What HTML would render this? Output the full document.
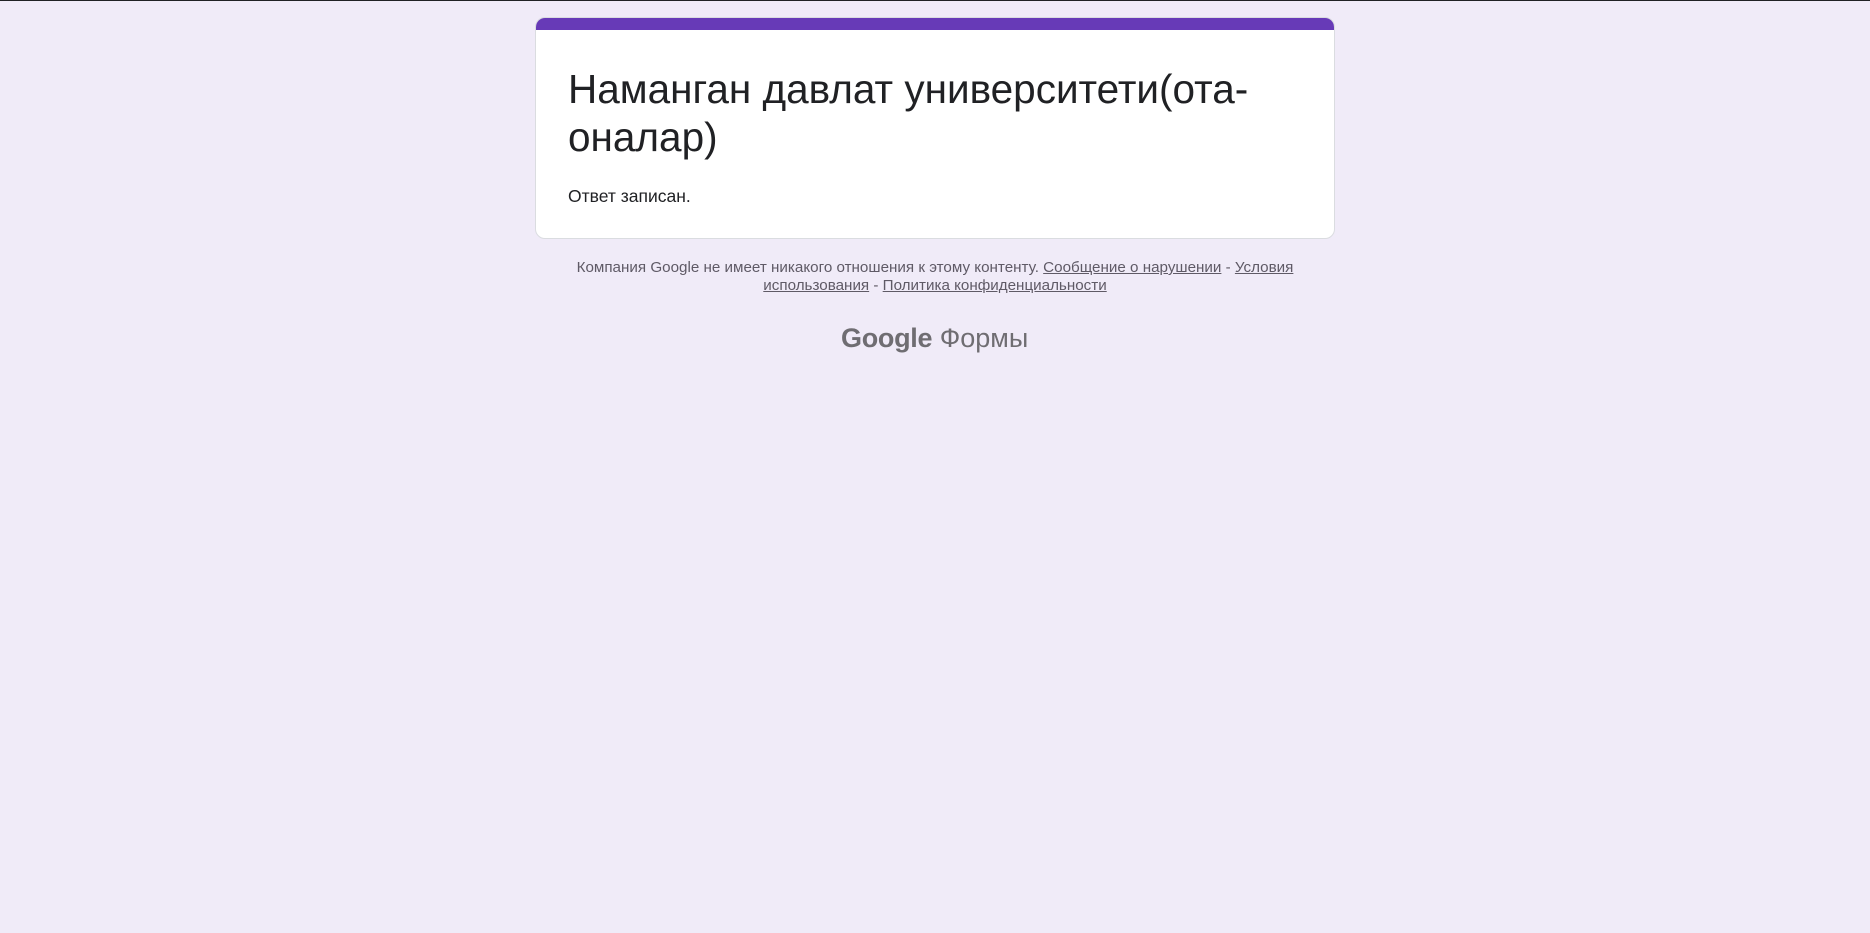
<!DOCTYPE html>
<html><head><meta charset="utf-8"><style>
html,body{margin:0;padding:0}
body{width:1870px;height:933px;background:#f0ebf8;font-family:"Liberation Sans",sans-serif;position:relative;overflow:hidden;border-top:1px solid #202124;box-sizing:border-box}
.card{position:absolute;left:535px;top:16px;width:800px;height:222px;box-sizing:border-box;background:#fff;border:1px solid #dadce0;border-radius:10px;overflow:hidden}
.band{position:absolute;left:-1px;right:-1px;top:-1px;height:13px;background:#673ab7}
.title{position:absolute;left:32px;top:47px;font-size:40.5px;line-height:48px;color:#202124;white-space:nowrap}
.msg{position:absolute;left:32px;top:166px;font-size:17.5px;line-height:24px;color:#202124}
.foot{position:absolute;left:535px;width:800px;top:258px;text-align:center;font-size:15.2px;line-height:17.5px;color:#5f5a66}
.foot a{color:#5f5a66;text-decoration:underline}
.logo{position:absolute;left:841px;top:321px;white-space:nowrap;color:#6f6d72;font-size:27px;line-height:32px}
.logo b{font-weight:bold;letter-spacing:-0.3px}
</style></head><body>
<div class="card"><div class="band"></div>
<div class="title">Наманган давлат университети(ота-<br>оналар)</div>
<div class="msg">Ответ записан.</div></div>
<div class="foot">Компания Google не имеет никакого отношения к этому контенту. <a>Сообщение о нарушении</a> - <a>Условия<br>использования</a> - <a>Политика конфиденциальности</a></div>
<div class="logo"><b>Google</b> Формы</div>
</body></html>
